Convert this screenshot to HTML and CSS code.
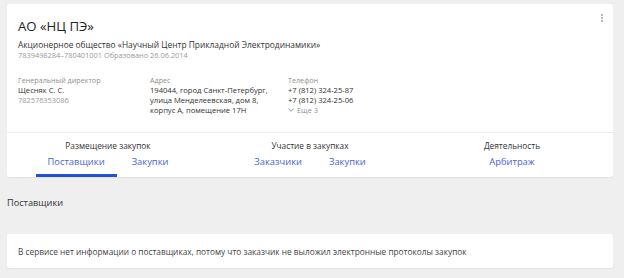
FILE: index.html
```html
<!DOCTYPE html>
<html lang="ru">
<head>
<meta charset="utf-8">
<link rel="stylesheet" href="styles.css">
</head>
<body>
<div class="page">
  <div class="card">
    <div class="head">
      <div class="menu"><span></span><span></span><span></span></div>
      <h1 class="title">АО «НЦ ПЭ»</h1>
      <div class="fullname">Акционерное общество «Научный Центр Прикладной Электродинамики»</div>
      <div class="meta">7839498284–780401001 Образовано 26.06.2014</div>
      <div class="info">
        <div class="col col-dir">
          <div class="label">Генеральный директор</div>
          <div class="value">Щесняк С. С.</div>
          <div class="muted">782576353086</div>
        </div>
        <div class="col col-addr">
          <div class="label">Адрес</div>
          <div class="value">194044, город Санкт-Петербург,</div>
          <div class="value">улица Менделеевская, дом 8,</div>
          <div class="value">корпус А, помещение 17Н</div>
        </div>
        <div class="col col-phone">
          <div class="label">Телефон</div>
          <div class="value">+7 (812) 324-25-87</div>
          <div class="value">+7 (812) 324-25-06</div>
          <div class="more"><svg class="chev" viewBox="0 0 6 4" width="6" height="4"><path d="M0.5 0.8 L3 3.2 L5.5 0.8" fill="none" stroke="#8a8fa0" stroke-width="0.9"/></svg>Еще 3</div>
        </div>
      </div>
    </div>
    <div class="tabs">
      <div class="group">
        <div class="group-title">Размещение закупок</div>
        <div class="group-tabs">
          <span class="tab active">Поставщики</span>
          <span class="tab">Закупки</span>
        </div>
      </div>
      <div class="group">
        <div class="group-title">Участие в закупках</div>
        <div class="group-tabs">
          <span class="tab">Заказчики</span>
          <span class="tab">Закупки</span>
        </div>
      </div>
      <div class="group">
        <div class="group-title">Деятельность</div>
        <div class="group-tabs">
          <span class="tab">Арбитраж</span>
        </div>
      </div>
    </div>
  </div>
  <h2 class="section-title">Поставщики</h2>
  <div class="notice">В сервисе нет информации о поставщиках, потому что заказчик не выложил электронные протоколы закупок</div>
</div>
</body>
</html>
```
FILE: styles.css
```css
* { box-sizing: border-box; }
html, body { margin: 0; padding: 0; }
body {
  background: #efefef;
  font-family: "Open Sans", "Noto Sans", sans-serif;
  color: #333;
  width: 624px;
  height: 278px;
  overflow: hidden;
}
.page {
  padding: 4px 11px 0 7px;
}
.card {
  background: #fff;
  border-radius: 3px;
  box-shadow: 0 1px 1px rgba(0,0,0,0.06);
}
.head {
  position: relative;
  padding: 13px 11px 0 11px;
  height: 129px;
  border-bottom: 1px solid #ececec;
}
.menu {
  position: absolute;
  right: 10px;
  top: 10px;
  display: flex;
  flex-direction: column;
  gap: 1px;
}
.menu span {
  width: 2px;
  height: 2px;
  background: #a0a0a0;
  border-radius: 1px;
}
.title {
  margin: 0;
  font-weight: 400;
  font-size: 13.2px;
  line-height: 18px;
  color: #222;
}
.fullname {
  margin-top: 4px;
  font-size: 8.38px;
  line-height: 11px;
  color: #333;
}
.meta {
  font-size: 7.4px;
  line-height: 10px;
  color: #9a9a9a;
}
.info {
  display: flex;
  margin-top: 15px;
}
.col { font-size: 7.6px; line-height: 10px; }
.col-dir { width: 132px; }
.col-addr { width: 138px; }
.label { color: #8f8f8f; font-size: 7.2px; }
.value { color: #333; }
.muted { color: #9a9a9a; font-size: 7.4px; }
.more { color: #8a8fa0; display: flex; align-items: center; gap: 3px; font-size: 7.4px; }
.chev { display: block; }
.tabs {
  display: grid;
  grid-template-columns: 1fr 1fr 1fr;
  height: 44px;
}
.group {
  display: flex;
  flex-direction: column;
  align-items: center;
  padding-top: 7px;
}
.group-title {
  font-size: 8.3px;
  line-height: 11px;
  color: #333;
}
.group-tabs {
  display: flex;
  gap: 3px;
  margin-top: 4px;
}
.tab {
  padding: 0 12px;
  height: 22px;
  font-size: 9.4px;
  line-height: 14px;
  color: #4a63d8;
  border-bottom: 3px solid transparent;
}
.tab.active {
  border-bottom-color: #2251d6;
}
.section-title {
  margin: 20px 0 0 0;
  font-weight: 400;
  font-size: 9.2px;
  line-height: 12px;
  color: #333;
}
.notice {
  margin-top: 25px;
  background: #fff;
  border-radius: 2px;
  box-shadow: 0 1px 1px rgba(0,0,0,0.05);
  height: 34px;
  padding: 0 11px;
  display: flex;
  align-items: center;
  font-size: 8.3px;
  color: #444;
}
```
